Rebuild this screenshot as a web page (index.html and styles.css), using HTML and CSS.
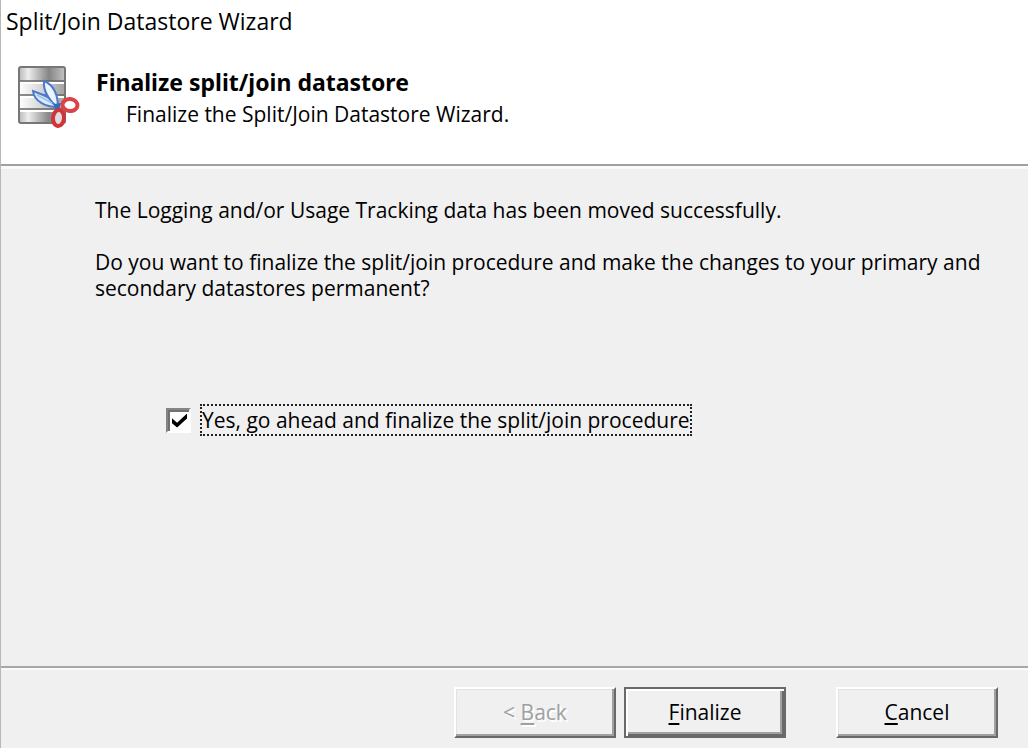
FILE: index.html
```html
<!DOCTYPE html>
<html lang="en">
<head>
<meta charset="utf-8">
<title>Split/Join Datastore Wizard</title>
<link rel="stylesheet" href="styles.css">
</head>
<body>
<form class="wizard">
  <header class="wizard-header">
    <div class="title-bar">Split/Join Datastore Wizard</div>
    <div class="banner">
      <svg class="banner-icon" viewBox="0 0 66 66" aria-hidden="true">
        <defs>
          <linearGradient id="metal">
            <stop offset="0" stop-color="#b8b8b8"/>
            <stop offset=".2" stop-color="#ededed"/>
            <stop offset=".65" stop-color="#858585"/>
            <stop offset="1" stop-color="#c4c4c4"/>
          </linearGradient>
          <linearGradient id="slot">
            <stop offset="0" stop-color="#ffffff"/>
            <stop offset=".4" stop-color="#dedede"/>
            <stop offset="1" stop-color="#a2a2a2"/>
          </linearGradient>
        </defs>
        <rect x="3" y="3" width="46" height="56" rx="2" fill="url(#slot)"/>
        <path d="M3 4h46v13H3zM3 48h46v11H3z" fill="url(#metal)"/>
        <path d="M4 19h44M4 33h44M4 47h44" stroke="#fff" stroke-width="2"/>
        <path d="M3 17h46M3 31h46M3 45h46" stroke="#666" stroke-width="1.6"/>
        <rect x="3" y="3" width="46" height="56" rx="2" fill="none" stroke="#777" stroke-width="2"/>
        <path d="M41 43C31 43 18 38 17 27C25 30 36 33 41 43Z" fill="#dce9fb" stroke="#4a7bcc" stroke-width="2"/>
        <path d="M42 44C34 37 27 27 28 17C38 21 42 32 42 44Z" fill="#eef4fd" stroke="#4a7bcc" stroke-width="2"/>
        <path d="M21 31L36 39" fill="none" stroke="#9fc0ee" stroke-width="1.5"/>
        <path d="M38 40L45 39L43 46L39 45Z" fill="#3568b9"/>
        <ellipse cx="54" cy="41" rx="7.500" ry="6" transform="rotate(6 54 41)" fill="#fff" stroke="#dc4347" stroke-width="4"/>
        <ellipse cx="42.500" cy="54" rx="5.500" ry="8" transform="rotate(5 42 54)" fill="#ddd" stroke="#d2343a" stroke-width="4"/>
      </svg>
      <div class="banner-text">
        <h1 class="banner-title">Finalize split/join datastore</h1>
        <p class="banner-subtitle">Finalize the Split/Join Datastore Wizard.</p>
      </div>
    </div>
  </header>
  <main class="wizard-body">
    <p class="message">The Logging and/or Usage Tracking data has been moved successfully.</p>
    <p class="message">Do you want to finalize the split/join procedure and make the changes to your primary and secondary datastores permanent?</p>
    <div class="confirm">
      <input class="confirm-box" type="checkbox" id="confirm" checked>
      <label class="confirm-label" for="confirm">Yes, go ahead and finalize the split/join procedure</label>
    </div>
  </main>
  <footer class="wizard-footer">
    <button class="button" type="button" disabled>&lt; <u>B</u>ack</button>
    <button class="button button-default" type="submit"><u>F</u>inalize</button>
    <button class="button button-cancel" type="button"><u>C</u>ancel</button>
  </footer>
</form>
</body>
</html>
```
FILE: styles.css
```css
* {
  box-sizing: border-box;
}

body {
  margin: 0;
  color: #000;
  font-family: "Open Sans", "Noto Sans", sans-serif;
  font-size: 21px;
  line-height: 26px;
}

h1,
p {
  margin: 0;
}

.wizard {
  display: flex;
  flex-direction: column;
  min-height: 100vh;
  background: #f0f0f0;
  border-left: 1px solid #b8b8b8;
}

.wizard-header {
  background: #fff;
  border-bottom: 2px solid #a0a0a0;
  padding-bottom: 34px;
}

.title-bar {
  padding: 8px 5px 0;
  font-size: 23px;
}

.banner {
  display: flex;
  gap: 14px;
  padding: 30px 15px 0;
}

.banner-icon {
  width: 66px;
  height: 66px;
}

.banner-text {
  padding-top: 5px;
}

.banner-title {
  font-family: "Noto Sans", "Open Sans", sans-serif;
  font-size: 23px;
  line-height: 26px;
}

.banner-subtitle {
  padding: 6px 0 0 30px;
}

.wizard-body {
  flex: 1;
  padding: 28px 40px 0 94px;
  border-top: 3px solid #fafafa;
}

.message {
  margin-bottom: 26px;
}

.confirm {
  display: flex;
  align-items: center;
  gap: 9px;
  margin-top: 103px;
  padding-left: 71px;
}

.confirm-box {
  appearance: none;
  width: 25px;
  height: 25px;
  margin: 0;
  border: 2px solid;
  border-color: #858585 #fff #fff #858585;
  background: #fff;
  box-shadow: inset 2px 2px #707070;
}

.confirm-box:checked::before {
  content: "";
  display: block;
  width: 15px;
  height: 14px;
  margin: 4px 0 0 4px;
  background: #000;
  clip-path: polygon(0 34%, 34% 66%, 100% 0, 100% 36%, 34% 100%, 0 70%);
}

.confirm-label {
  padding: 1px 0;
  border: 2px dotted #222;
}

.wizard-footer {
  display: flex;
  justify-content: flex-end;
  gap: 8px;
  padding: 19px 30px 10px;
  border-top: 2px solid #a8a8a8;
  box-shadow: inset 0 2px #fafafa;
}

.button {
  width: 162px;
  height: 51px;
  padding: 0 0 2px;
  border: 2px solid;
  border-color: #fff #696969 #696969 #fff;
  background: #f0f0f0;
  box-shadow: inset -2px -2px #a0a0a0, inset 1px 1px #e3e3e3;
  color: #000;
  font: inherit;
}

.button u {
  text-underline-offset: 3px;
  text-decoration-thickness: 2px;
  text-decoration-skip-ink: none;
}

.button:disabled {
  color: #a0a0a0;
  text-shadow: 2px 2px #fff;
}

.button-default {
  border-color: #696969;
  box-shadow: inset 2px 2px #fff, inset -2px -2px #696969, inset -4px -4px #a0a0a0;
}

.button-cancel {
  margin-left: 42px;
}
```
